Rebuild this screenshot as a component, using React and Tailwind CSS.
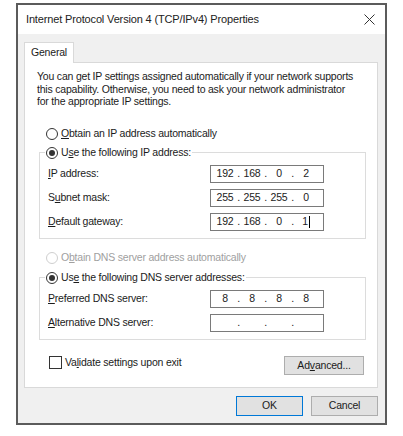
import { Fragment } from 'react'

function Radio({ checked, disabled }) {
  return (
    <span
      className={`flex h-[12px] w-[12px] shrink-0 items-center justify-center rounded-full border bg-white ${
        disabled ? 'border-[#cfcfcf]' : 'border-[#333333]'
      }`}
    >
      {checked && <span className="h-[6px] w-[6px] rounded-full bg-[#333333]" />}
    </span>
  )
}

function IpBox({ parts, caret }) {
  return (
    <div className="flex h-[18px] w-[114px] items-center border border-[#7a7a7a] bg-white pl-[3px]">
      {parts.map((p, i) => (
        <Fragment key={i}>
          <span className="flex w-[22px] items-center justify-center">
            {p}
            {caret && i === 3 && <span className="ml-[1px] h-[12px] w-px bg-black" />}
          </span>
          {i < 3 && <span className="w-[5px] text-center">.</span>}
        </Fragment>
      ))}
    </div>
  )
}

function Row({ label, parts, caret }) {
  return (
    <div className="flex h-[18px] items-center">
      <span className="w-[162px]">{label}</span>
      <IpBox parts={parts} caret={caret} />
    </div>
  )
}

export default function App() {
  return (
    <div className="h-[436px] w-[403px] bg-white pl-[16px] pt-[3px] font-['Liberation_Sans',Arial,sans-serif] text-[10.5px] tracking-[-0.2px] text-[#1b1b1b]">
      <div className="flex h-[422px] w-[371px] flex-col border-2 border-[#5b5b5b] bg-[#f0f0f0]">
        {/* title bar */}
        <div className="flex h-[29px] items-center justify-between bg-white pl-[8px] pr-[10px]">
          <span className="text-[11px] tracking-[-0.15px] text-[#222]">Internet Protocol Version 4 (TCP/IPv4) Properties</span>
          <svg width="11" height="11" viewBox="0 0 11 11" stroke="#333" strokeWidth="1" fill="none">
            <path d="M0.5 0.5L10.5 10.5M10.5 0.5L0.5 10.5" />
          </svg>
        </div>

        <div className="mt-[8px] ml-[6px] mr-[7px]">
          <div className="relative z-10 -mb-px flex h-[21px] w-[50px] items-center border-x border-t border-[#d9d9d9] bg-white px-[6px]">
            General
          </div>

          <div className="border border-[#d9d9d9] bg-white pb-[12px] pl-[12px] pr-[11px] pt-[7px]">
            <p className="whitespace-nowrap leading-[12.5px]">
              You can get IP settings assigned automatically if your network supports
              <br />
              this capability. Otherwise, you need to ask your network administrator
              <br />
              for the appropriate IP settings.
            </p>

            <div className="ml-[9px] mt-[19px] flex h-[14px] items-center gap-[3px]">
              <Radio />
              <span>
                <u>O</u>btain an IP address automatically
              </span>
            </div>

            <fieldset className="ml-[2px] mt-[5px] border border-[#dcdcdc] px-0 pb-[7px]">
              <legend className="ml-[5px] flex h-[14px] items-center gap-[3px] px-[1px]">
                <Radio checked />
                <span>
                  U<u>s</u>e the following IP address:
                </span>
              </legend>
              <div className="flex flex-col gap-[6px] pl-[8px] pt-[5px]">
                <Row label={<><u>I</u>P address:</>} parts={['192', '168', '0', '2']} />
                <Row label={<>S<u>u</u>bnet mask:</>} parts={['255', '255', '255', '0']} />
                <Row label={<><u>D</u>efault gateway:</>} parts={['192', '168', '0', '1']} caret />
              </div>
            </fieldset>

            <div className="ml-[9px] mt-[12px] flex h-[14px] items-center gap-[3px] text-[#a0a0a0]">
              <Radio disabled />
              <span>
                O<u>b</u>tain DNS server address automatically
              </span>
            </div>

            <fieldset className="ml-[2px] mt-[6px] border border-[#dcdcdc] px-0 pb-[7px]">
              <legend className="ml-[5px] flex h-[14px] items-center gap-[3px] px-[1px]">
                <Radio checked />
                <span>
                  Us<u>e</u> the following DNS server addresses:
                </span>
              </legend>
              <div className="flex flex-col gap-[6px] pl-[8px] pt-[5px]">
                <Row label={<><u>P</u>referred DNS server:</>} parts={['8', '8', '8', '8']} />
                <Row label={<><u>A</u>lternative DNS server:</>} parts={['', '', '', '']} />
              </div>
            </fieldset>

            <div className="ml-[12px] mr-[2px] mt-[16.5px] flex items-start justify-between">
              <div className="flex h-[13px] items-center gap-[3px]">
                <span className="h-[13px] w-[13px] border border-[#333333] bg-white" />
                <span>
                  Va<u>l</u>idate settings upon exit
                </span>
              </div>
              <div className="flex h-[19px] w-[80px] items-center justify-center border border-[#adadad] bg-[#e1e1e1]">
                Ad<u>v</u>anced...
              </div>
            </div>
          </div>
        </div>

        <div className="mr-[7px] mt-[8px] flex justify-end gap-[8px]">
          <div className="flex h-[20px] w-[67px] items-center justify-center border border-[#0078d7] bg-[#e1e1e1]">
            OK
          </div>
          <div className="flex h-[20px] w-[67px] items-center justify-center border border-[#adadad] bg-[#e1e1e1]">
            Cancel
          </div>
        </div>
      </div>
    </div>
  )
}
